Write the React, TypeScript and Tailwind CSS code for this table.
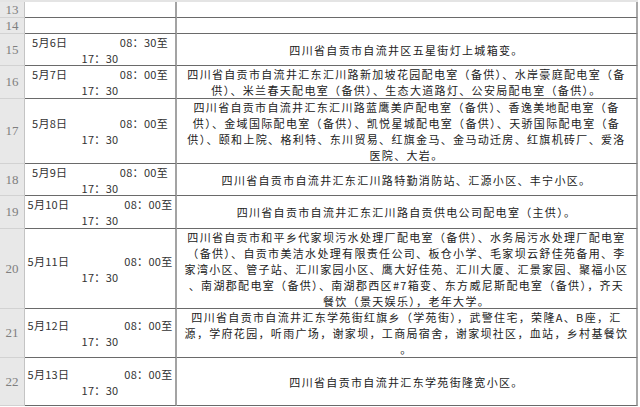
const rows = [
  { n: 13, h: "h-[16px]", day: "", lines: [] as string[] },
  { n: 14, h: "h-[16px]", day: "", lines: [] as string[] },
  {
    n: 15,
    h: "h-[32px]",
    day: "5月6日",
    start: "08：30至",
    lines: ["四川省自贡市自流井区五星街灯上城箱变。"],
  },
  {
    n: 16,
    h: "h-[33px]",
    day: "5月7日",
    start: "08：00至",
    lines: [
      "四川省自贡市自流井汇东汇川路新加坡花园配电室（备供）、水岸豪庭配电室（备",
      "供）、米兰春天配电室（备供）、生态大道路灯、公安局配电室（备供）。",
    ],
  },
  {
    n: 17,
    h: "h-[65px]",
    day: "5月8日",
    start: "08：00至",
    lines: [
      "四川省自贡市自流井汇东汇川路蓝鹰美庐配电室（备供）、香逸美地配电室（备",
      "供）、金域国际配电室（备供）、凯悦星城配电室（备供）、天骄国际配电室（备",
      "供）、颐和上院、格利特、东川贸易、红旗金马、金马动迁房、红旗机砖厂、爱洛",
      "医院、大岩。",
    ],
  },
  {
    n: 18,
    h: "h-[32px]",
    day: "5月9日",
    start: "08：00至",
    lines: ["四川省自贡市自流井汇东汇川路特勤消防站、汇源小区、丰宁小区。"],
  },
  {
    n: 19,
    h: "h-[33px]",
    day: "5月10日",
    start: "08：00至",
    lines: ["四川省自贡市自流井汇东汇川路自贡供电公司配电室（主供）。"],
  },
  {
    n: 20,
    h: "h-[80px]",
    day: "5月11日",
    start: "08：00至",
    lines: [
      "四川省自贡市和平乡代家坝污水处理厂配电室（备供）、水务局污水处理厂配电室",
      "（备供）、自贡市美洁水处理有限责任公司、板仓小学、毛家坝云舒佳苑备用、李",
      "家湾小区、管子站、汇川家园小区、鹰大好佳苑、汇川大厦、汇景家园、聚福小区",
      "、南湖郡配电室（备供）、南湖郡西区#7箱变、东方威尼斯配电室（备供），齐天",
      "餐饮（景天娱乐），老年大学。",
    ],
  },
  {
    n: 21,
    h: "h-[49px]",
    day: "5月12日",
    start: "08：00至",
    lines: [
      "四川省自贡市自流井汇东学苑街红旗乡（学苑街），武警住宅，荣隆A、B座，汇",
      "源，学府花园，听雨广场，谢家坝，工商局宿舍，谢家坝社区，血站，乡村基餐饮",
      "。",
    ],
  },
  {
    n: 22,
    h: "h-[48px]",
    day: "5月13日",
    start: "08：00至",
    lines: ["四川省自贡市自流井汇东学苑街隆宽小区。"],
  },
];

export default function App() {
  return (
    <div className="w-[640px] h-[407px] overflow-hidden bg-white font-['Noto_Sans_CJK_SC',sans-serif]">
      {/* top edge of the sheet */}
      <div className="h-[2px] w-[638px] bg-[#e4e4e4]" />

      {rows.map((r) => (
        <div key={r.n} className={`flex w-[638px] ${r.h}`}>
          {/* row number */}
          <div className="w-[25px] shrink-0 flex items-center justify-center bg-[#e8e8e8] border-r border-b border-r-[#c4c4c4] border-b-[#d2d2d2] font-['Liberation_Serif',serif] text-[13px] text-[#7f7f7f]">
            {r.n}
          </div>

          {/* date */}
          <div className="w-[152px] shrink-0 flex flex-col items-center justify-center border-b border-r-2 border-b-[#6a6a6a] border-r-[#a3a3a3] text-[11px] leading-[16px] tracking-[0.3px] text-[#333]">
            {r.day && (
              <>
                <div
                  className={`flex justify-between ${
                    r.day.length > 4 ? "w-[145px]" : "w-[136px]"
                  }`}
                >
                  <span>{r.day}</span>
                  <span>{r.start}</span>
                </div>
                <div>17：30</div>
              </>
            )}
          </div>

          {/* content */}
          <div className="flex-1 flex flex-col items-center justify-center border-b border-r-2 border-b-[#6a6a6a] border-r-[#a8a8a8] text-[11px] leading-[16px] tracking-[1.33px] text-[#222]">
            {r.lines.map((l, i) => (
              <div key={i} className="whitespace-nowrap text-center">
                {l}
              </div>
            ))}
          </div>
        </div>
      ))}
    </div>
  );
}
